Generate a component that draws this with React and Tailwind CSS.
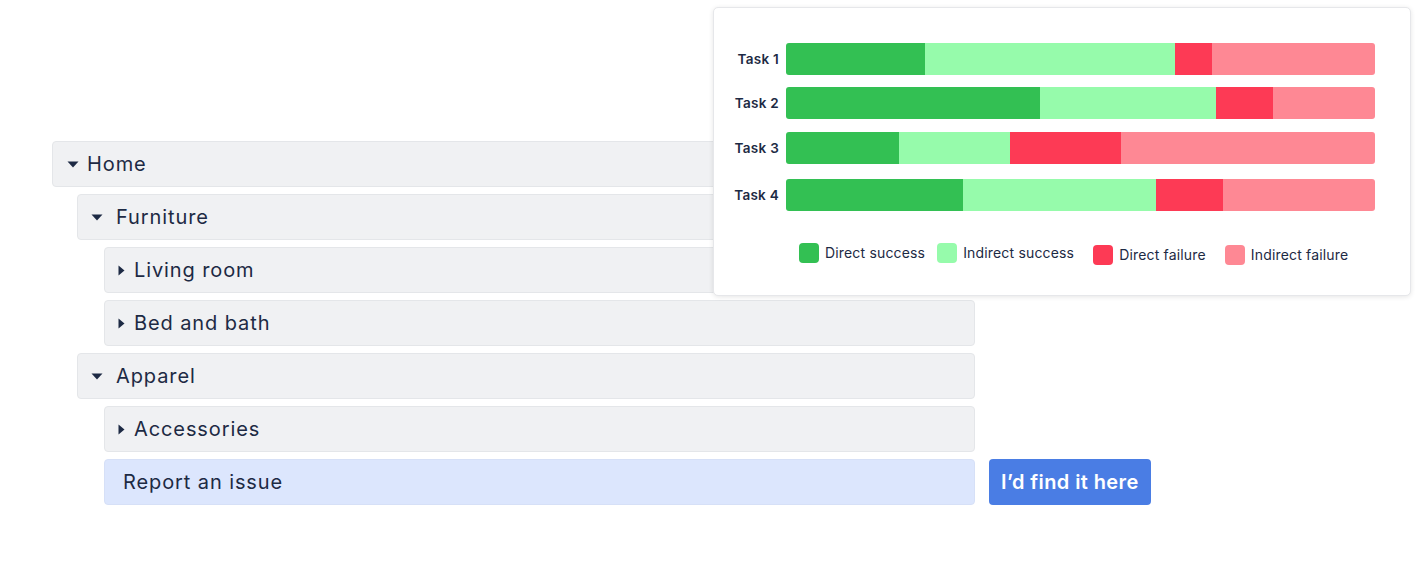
import React from 'react';

const tasks = [
  { name: 'Task 1', gap: 'mt-0', parts: [139, 250, 37, 163] },
  { name: 'Task 2', gap: 'mt-[12px]', parts: [254, 176, 57, 102] },
  { name: 'Task 3', gap: 'mt-[13px]', parts: [113, 111, 111, 254] },
  { name: 'Task 4', gap: 'mt-[15px]', parts: [177, 193, 67, 152] },
];

const series = [
  { label: 'Direct success', color: 'bg-[#33c053]', shift: 'mt-0' },
  { label: 'Indirect success', color: 'bg-[#96fbab]', shift: 'mt-0' },
  { label: 'Direct failure', color: 'bg-[#fd3a55]', shift: 'mt-[2px]' },
  { label: 'Indirect failure', color: 'bg-[#fe8894]', shift: 'mt-[2px]' },
];

const font = "font-['Inter','Liberation_Sans',sans-serif]";

function CaretDown() {
  return (
    <svg width="12" height="7" viewBox="0 0 12 7" className="shrink-0">
      <path d="M0.5 0.5h11L6 6.5z" fill="#1d2a44" />
    </svg>
  );
}

function CaretRight() {
  return (
    <svg width="7" height="11" viewBox="0 0 7 11" className="shrink-0">
      <path d="M0.5 0.5v10L6.5 5.5z" fill="#1d2a44" />
    </svg>
  );
}

function Row({ open, label, pad, gap }) {
  return (
    <div className={`h-[46px] flex items-center ${pad} ${gap} bg-[#f0f1f3] border border-[#e4e6e9] rounded-[4px] text-[20px] tracking-[0.045em] text-[#1d2a44]`}>
      {open ? <CaretDown /> : <CaretRight />}
      <span>{label}</span>
    </div>
  );
}

function TaskChart() {
  const total = 589;
  return (
    <div className="absolute left-[713px] top-[7px] w-[698px] h-[289px] bg-white border border-[#e6e7ea] rounded-[5px] shadow-[0_1px_5px_rgba(0,0,0,0.10)]">
      <div className="flex flex-col pt-[35px]">
        {tasks.map((t) => (
          <div key={t.name} className={`flex items-center ${t.gap}`}>
            <span className="w-[65px] text-right text-[13.5px] tracking-[0.02em] font-semibold text-[#1d2a44]">{t.name}</span>
            <div className="ml-[7px] w-[589px] h-[32px] flex rounded-[3px] overflow-hidden">
              {t.parts.map((w, i) => (
                <div
                  key={i}
                  className={`h-full ${series[i].color}`}
                  style={{ width: `${(w / total) * 100}%` }}
                />
              ))}
            </div>
          </div>
        ))}
      </div>
      <div className="flex items-start pl-[85px] mt-[31px] text-[14px] tracking-[0.012em] text-[#1d2a44]">
        {series.map((s, i) => (
          <div key={s.label} className={`flex items-center gap-[6px] ${s.shift} ${i < 3 ? (i === 0 ? 'mr-[12px]' : 'mr-[19px]') : ''}`}>
            <span className={`w-[20px] h-[20px] rounded-[4px] ${s.color}`} />
            <span>{s.label}</span>
          </div>
        ))}
      </div>
    </div>
  );
}

export default function App() {
  return (
    <div className={`relative w-[1420px] h-[577px] bg-white ${font}`}>
      <div className="flex flex-col gap-[7px] pl-[52px] pt-[141px]">
        <div className="w-[923px]">
          <Row open label="Home" pad="pl-[14px]" gap="gap-[8px]" />
        </div>
        <div className="flex flex-col gap-[7px] pl-[25px]">
          <div className="w-[898px]">
            <Row open label="Furniture" pad="pl-[13px]" gap="gap-[13px]" />
          </div>
          <div className="flex flex-col gap-[7px] pl-[27px] w-[898px]">
            <Row label="Living room" pad="pl-[13px]" gap="gap-[9px]" />
            <Row label="Bed and bath" pad="pl-[13px]" gap="gap-[9px]" />
          </div>
          <div className="w-[898px]">
            <Row open label="Apparel" pad="pl-[13px]" gap="gap-[13px]" />
          </div>
          <div className="flex flex-col gap-[7px] pl-[27px]">
            <div className="w-[871px]">
              <Row label="Accessories" pad="pl-[13px]" gap="gap-[9px]" />
            </div>
            <div className="flex items-center gap-[14px]">
              <div className="w-[871px] h-[46px] flex items-center pl-[18px] bg-[#dce6fd] border border-[#d6e0f7] rounded-[4px] text-[20px] tracking-[0.045em] text-[#1d2a44]">
                Report an issue
              </div>
              <button className="h-[46px] px-[12px] bg-[#4a7de4] rounded-[4px] text-white text-[20px] tracking-[0.02em] font-semibold">
                I’d find it here
              </button>
            </div>
          </div>
        </div>
      </div>
      <TaskChart />
    </div>
  );
}
